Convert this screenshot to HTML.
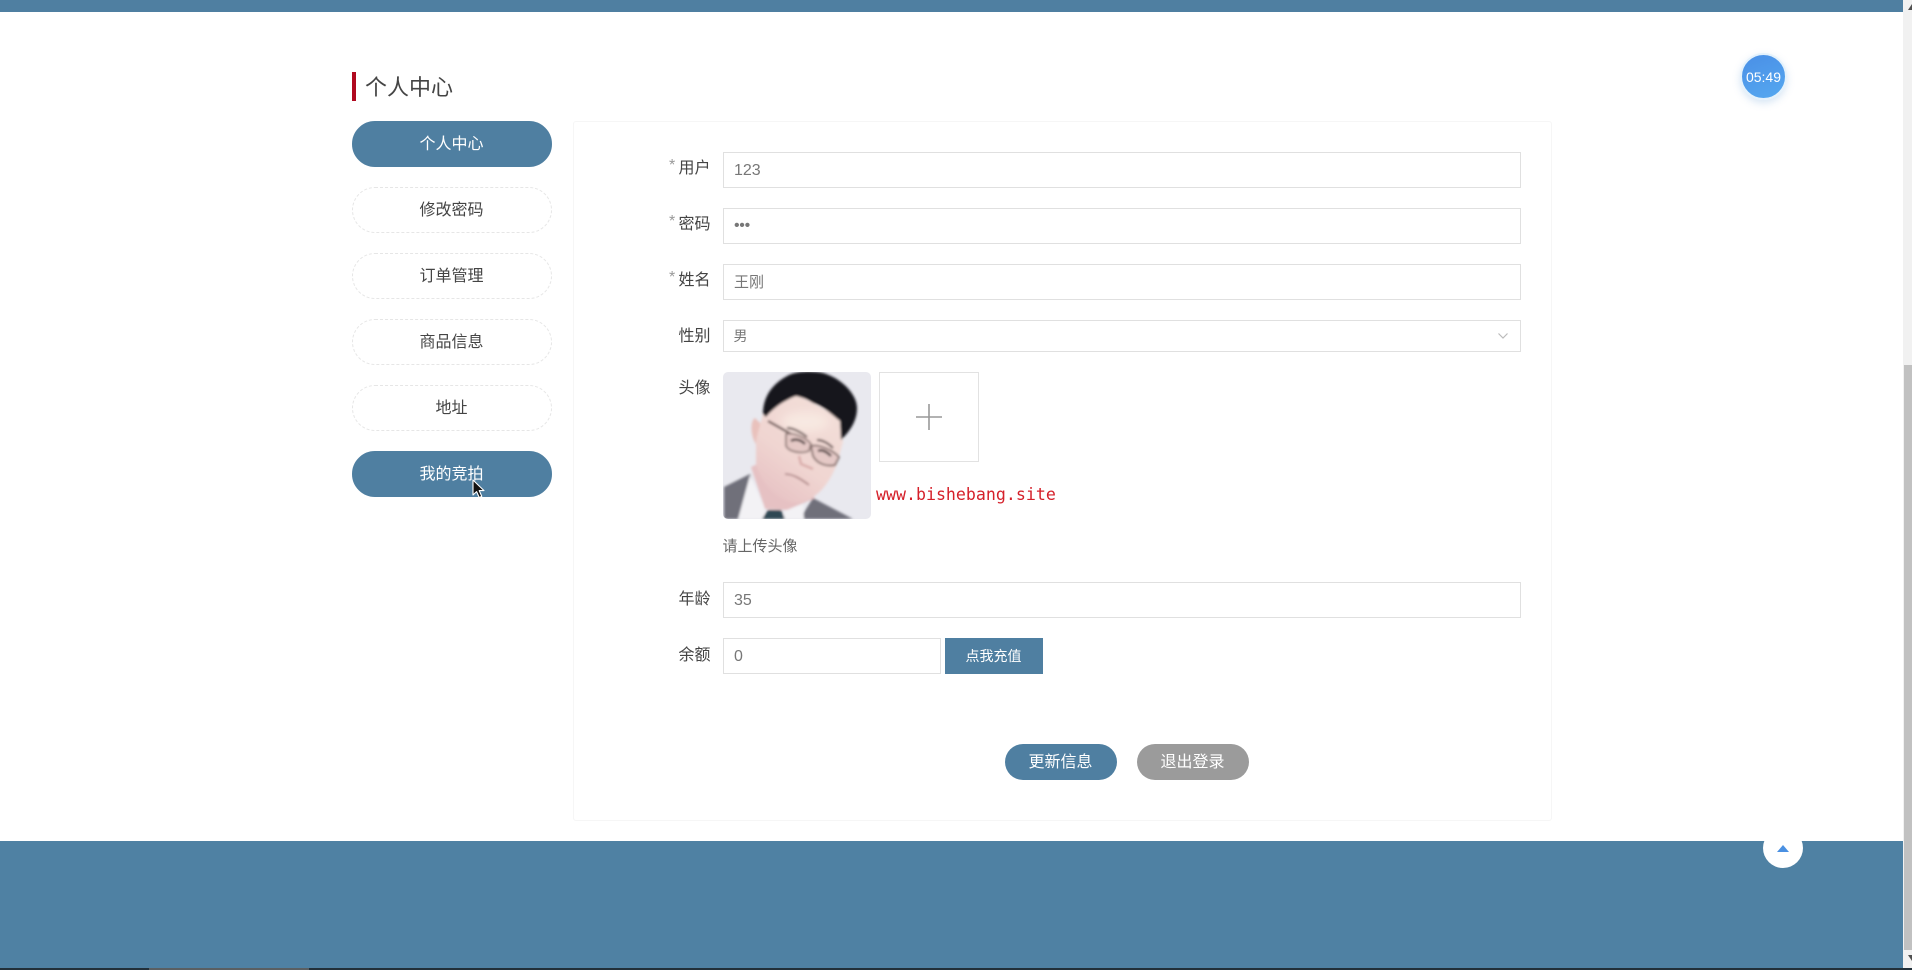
<!DOCTYPE html>
<html lang="zh">
<head>
<meta charset="utf-8">
<title>个人中心</title>
<style>
html,body{margin:0;padding:0;width:1912px;height:970px;overflow:hidden;background:#fff}
body{position:relative;font-family:"Liberation Sans","Noto Sans CJK SC",sans-serif;color:#333}
.a{position:absolute;box-sizing:border-box}
.t{position:absolute;white-space:nowrap;line-height:1}
.nav{left:352px;width:200px;height:46px;border-radius:23px;text-align:center;line-height:46px;font-size:16px;color:#444;border:1px dashed #e6e6e6;background:#fff;text-indent:-1px}
.nav.on{background:#4f7fa1;color:#fff;border:1px solid #4f7fa1}
.in{left:723px;width:798px;height:36px;border:1px solid #e0e0e0;background:#fff;font-size:16px;color:#777;line-height:35px;padding-left:10px}
.lab{font-size:16px;color:#444;text-align:right;width:60px;left:650.5px}
.star{position:absolute;left:669px;font-size:16px;color:#999;line-height:1}
.btn{height:36px;width:112px;border-radius:18px;color:#fff;text-align:center;line-height:37px;font-size:16px;top:744px;text-indent:-1px}
</style>
</head>
<body>
<div class="a" style="left:0;top:0;width:1903px;height:12px;background:#4f7fa1"></div>

<div class="a" style="left:352px;top:72px;width:4px;height:29px;background:#b0091f"></div>
<div class="t" style="left:365px;top:77px;font-size:22px;color:#444">个人中心</div>

<div class="a nav on" style="top:121px">个人中心</div>
<div class="a nav" style="top:187px">修改密码</div>
<div class="a nav" style="top:253px">订单管理</div>
<div class="a nav" style="top:319px">商品信息</div>
<div class="a nav" style="top:385px">地址</div>
<div class="a nav on" style="top:451px">我的竞拍</div>

<div class="a" style="left:573px;top:121px;width:979px;height:700px;border:1px solid #f6f6f6;border-radius:3px"></div>

<span class="star" style="top:158px">*</span>
<div class="t lab" style="top:161px">用户</div>
<div class="a in" style="top:152px">123</div>

<span class="star" style="top:214px">*</span>
<div class="t lab" style="top:217px">密码</div>
<div class="a in" style="top:208px;letter-spacing:-.3px;line-height:33px">•••</div>

<span class="star" style="top:270px">*</span>
<div class="t lab" style="top:273px">姓名</div>
<div class="a in" style="top:264px;font-size:15px">王刚</div>

<div class="t lab" style="top:329px">性别</div>
<div class="a in" style="top:320px;height:32px;font-size:14px;line-height:31px;padding-left:9.5px">男</div>
<svg class="a" style="left:1496px;top:331px" width="14" height="10" viewBox="0 0 14 10"><path d="M2.5 2.5 L7 7 L11.5 2.5" fill="none" stroke="#bbb" stroke-width="1.2"/></svg>

<div class="t lab" style="top:381px">头像</div>

<svg class="a" style="left:723px;top:372px;border-radius:5px" width="148" height="147" viewBox="0 0 148 147">
<defs><filter id="b" x="-5%" y="-5%" width="110%" height="110%"><feGaussianBlur stdDeviation="1.2"/></filter>
<filter id="b2" x="-30%" y="-30%" width="160%" height="160%"><feGaussianBlur stdDeviation="5"/></filter>
<linearGradient id="sk" x1="0.8" y1="0" x2="0.2" y2="1"><stop offset="0" stop-color="#f3dfd9"/><stop offset=".6" stop-color="#f0d5d1"/><stop offset="1" stop-color="#e6c1c3"/></linearGradient></defs>
<rect width="148" height="147" fill="#e9e9ef"/>
<g filter="url(#b)">
<path d="M1 115 L27 102 L40 137 L38 147 L1 147Z" fill="#70707a"/>
<path d="M80 142 L90 126 L130 147 L78 147Z" fill="#70707a"/>
<path d="M27 103 L42 136 L40 147 L15 147Z" fill="#f3f2f5"/>
<path d="M62 138 L80 132 L81 147 L60 147Z" fill="#f3f2f5"/>
<path d="M28 95 L42 137 L64 138 L92 126 L50 85Z" fill="#e6c1c3"/>
<path d="M39 147 L45 138 L58 138 L62 147Z" fill="#2f4652"/>
<path d="M32 46 C25 50 29 76 40 77 L46 60Z" fill="#e9c1bc"/>
<path d="M40 42 L73 22 L117 46 L120 70 L114 92 C106 112 94 128 74 131 C55 130 38 112 33 92 L33 68Z" fill="url(#sk)"/>
<ellipse cx="82" cy="50" rx="24" ry="10" fill="#f8e9e2" filter="url(#b2)"/>
<path d="M62 102 C70 102 78 107 86 113" stroke="#a67a7c" stroke-width="1.6" fill="none"/>
<path d="M76 84 L78 92 L90 97" stroke="#d6a6a4" stroke-width="2.2" fill="none"/>
<path d="M40 42 C40 26 48 12 66 3 C76 -1 90 -1 100 1 C118 6 134 22 134 36 C134 50 126 60 118 68 L117 49 C108 42 100 34 90 31 C84 27 78 25 73 24 C62 28 50 36 43 45Z" fill="#17171b"/>
<path d="M45 49 L68 62" stroke="#6a5552" stroke-width="2.4" fill="none"/>
<path d="M63 62 C70 60 84 66 88 72 L86 79 C78 82 66 80 63 74Z" fill="rgba(205,175,175,.35)" stroke="#8a7571" stroke-width="1.7"/>
<path d="M88 74 C96 72 110 78 116 85 L112 93 C104 95 94 92 90 84Z" fill="rgba(205,175,175,.35)" stroke="#78625f" stroke-width="1.7"/>
<path d="M68 69 C72 66 78 68 82 72" stroke="#3b2c2c" stroke-width="2.4" fill="none"/>
<path d="M95 79 C99 77 104 80 108 84" stroke="#3b2c2c" stroke-width="2.4" fill="none"/>
<path d="M64 56 C70 56 78 60 84 65 M94 68 C100 68 106 72 110 76" stroke="#5a4644" stroke-width="2" fill="none"/>
</g>
</svg>

<div class="a" style="left:879px;top:372px;width:100px;height:90px;border:1px solid #e2e2e2;background:#fff"></div>
<svg class="a" style="left:916px;top:404px" width="26" height="26" viewBox="0 0 26 26"><path d="M13 0V26M0 13H26" stroke="#999" stroke-width="1.6"/></svg>

<div class="t" style="left:876px;top:487px;font-family:'DejaVu Sans Mono','Liberation Mono',monospace;font-size:16.6px;color:#d5202a">www.bishebang.site</div>
<div class="t" style="left:722.5px;top:539px;font-size:15px;color:#666">请上传头像</div>

<div class="t lab" style="top:592px">年龄</div>
<div class="a in" style="top:582px">35</div>

<div class="t lab" style="top:648px">余额</div>
<div class="a in" style="top:638px;width:218px">0</div>
<div class="a" style="left:945px;top:638px;width:98px;height:36px;background:#4f7fa1;color:#fff;font-size:14px;text-align:center;line-height:36px;text-indent:-1px">点我充值</div>

<div class="a btn" style="left:1005px;background:#4f7fa1">更新信息</div>
<div class="a btn" style="left:1137px;background:#9b9b9b">退出登录</div>

<div class="a" style="left:0;top:841px;width:1903px;height:127px;background:#4f81a3"></div>
<div class="a" style="left:0;top:968px;width:1912px;height:2px;background:#22303a"></div>
<div class="a" style="left:149px;top:968px;width:160px;height:2px;background:#5a5f62"></div>

<div class="a" style="left:1740px;top:53px;width:47px;height:47px;border-radius:50%;background:linear-gradient(160deg,#4a8fe6,#55a8f0);border:2px solid #e4f2fc;box-shadow:0 3px 8px rgba(120,170,220,.3);color:#fff;font-size:14px;text-align:center;line-height:44px;font-weight:300">05:49</div>

<div class="a" style="left:1763px;top:828px;width:40px;height:40px;border-radius:50%;background:#fff"></div>
<svg class="a" style="left:1777px;top:845px" width="12" height="7" viewBox="0 0 12 7"><path d="M6 0L12 7H0Z" fill="#4a90e2"/></svg>

<div class="a" style="left:1903px;top:0;width:9px;height:968px;background:#f1f1f1"></div>
<div class="a" style="left:1904px;top:365px;width:8px;height:585px;background:#c1c1c1"></div>
<svg class="a" style="left:1908px;top:4px" width="8" height="7" viewBox="0 0 8 7"><path d="M4 0L8 6H0Z" fill="#505050"/></svg>
<svg class="a" style="left:1908px;top:955px" width="8" height="7" viewBox="0 0 8 7"><path d="M0 0H8L4 6Z" fill="#505050"/></svg>

<svg class="a" style="left:472px;top:479px" width="14" height="20" viewBox="0 0 14 20"><path d="M1 1V16L4.6 12.6L7.2 18.5L9.8 17.4L7.2 11.6H12Z" fill="#111" stroke="#fff" stroke-width="1.1" stroke-linejoin="round"/></svg>
</body>
</html>
